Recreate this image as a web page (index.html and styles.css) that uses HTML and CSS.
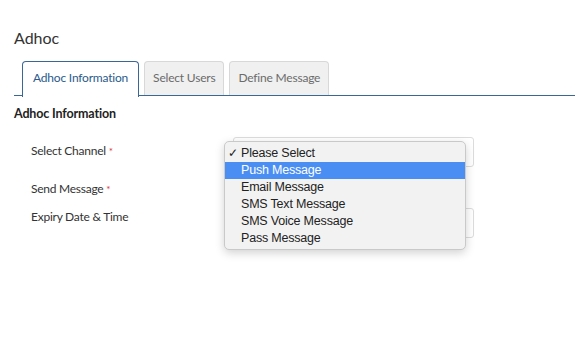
FILE: index.html
```html
<!DOCTYPE html>
<html lang="en">
<head>
  <meta charset="UTF-8">
  <title>Adhoc</title>
  <link rel="stylesheet" href="styles.css">
</head>
<body>
  <div class="page">
    <h1 class="title">Adhoc</h1>
    <div class="tabs">
      <div class="tab active">Adhoc Information</div>
      <div class="tab">Select Users</div>
      <div class="tab">Define Message</div>
    </div>
    <h2 class="section">Adhoc Information</h2>
    <div class="form">
      <div class="row first">
        <div class="label">Select Channel <span class="req">*</span></div>
        <div class="field">
          <div class="selectbox"></div>
          <ul class="popup">
            <li class="opt"><span class="check">&#10003;</span>Please Select</li>
            <li class="opt hover">Push Message</li>
            <li class="opt">Email Message</li>
            <li class="opt">SMS Text Message</li>
            <li class="opt">SMS Voice Message</li>
            <li class="opt">Pass Message</li>
          </ul>
        </div>
      </div>
      <div class="row second">
        <div class="label">Send Message <span class="req">*</span></div>
        <div class="field small"></div>
      </div>
      <div class="row third">
        <div class="label">Expiry Date &amp; Time</div>
        <div class="field">
          <div class="selectbox"></div>
        </div>
      </div>
    </div>
  </div>
</body>
</html>
```

FILE: styles.css
```css
body {
  margin: 0;
  font-family: Lato, 'Open Sans', sans-serif;
  color: #333;
  background: #fff;
}
.page {
  box-sizing: border-box;
  min-height: 100vh;
  padding: 0 0 0 14px;
}
.title {
  margin: 0;
  padding-top: 28px;
  font-size: 16px;
  font-weight: normal;
  line-height: 20px;
  color: #333;
}

/* tabs */
.tabs {
  display: flex;
  gap: 5px;
  margin-top: 13px;
  padding-left: 8px;
  border-bottom: 1.5px solid #3b6797;
  height: 34px;
}
.tab {
  box-sizing: border-box;
  height: 34px;
  padding: 0 8px;
  font-size: 12px;
  letter-spacing: -0.2px;
  line-height: 32px;
  color: #6b6b6b;
  background: #f0f0f0;
  border: 1px solid #d8d8d8;
  border-bottom: none;
  border-radius: 4px 4px 0 0;
}
.tab.active {
  height: 35.5px;
  color: #2b5a8c;
  background: #fff;
  border: 1.5px solid #3b6797;
  border-bottom: none;
  padding: 0 10px;
}

.section {
  margin: 9px 0 0;
  font-size: 12.5px;
  font-weight: bold;
  letter-spacing: -0.15px;
  line-height: 18px;
  color: #222;
}

/* form */
.form {
  padding-left: 17px;
  margin-top: 14px;
  font-size: 12px;
  letter-spacing: -0.25px;
}
.row {
  display: grid;
  grid-template-columns: 202px 241px;
}
.second { margin-top: 12px; }
.third { margin-top: 9px; }
.label {
  line-height: 18px;
  color: #333;
}
.first .label { padding-top: 5px; }
.second .label { padding-top: 1px; }
.req {
  color: #d9363e;
  font-size: 10px;
  vertical-align: top;
}
.field {
  position: relative;
}
.field.small {
  height: 20px;
}
.selectbox {
  box-sizing: border-box;
  height: 30px;
  border: 1px solid #dcdcdc;
  border-radius: 3px;
  background: #fff;
}

/* native select popup */
.popup {
  position: absolute;
  top: 4px;
  left: -9px;
  width: 242px;
  box-sizing: border-box;
  margin: 0;
  padding: 3px 0 2px;
  list-style: none;
  background: #f2f2f2;
  border: 1px solid #c9c9c9;
  border-radius: 5px;
  box-shadow: 0 3px 10px rgba(0, 0, 0, 0.18);
  font-family: 'Liberation Sans', sans-serif;
  font-size: 12.5px;
  letter-spacing: -0.2px;
  color: #222;
  z-index: 2;
}
.opt {
  position: relative;
  height: 17px;
  line-height: 17px;
  padding-left: 16px;
}
.opt.hover {
  background: #4a8ef3;
  color: #fff;
}
.check {
  position: absolute;
  left: 3px;
  font-size: 12px;
}
```
